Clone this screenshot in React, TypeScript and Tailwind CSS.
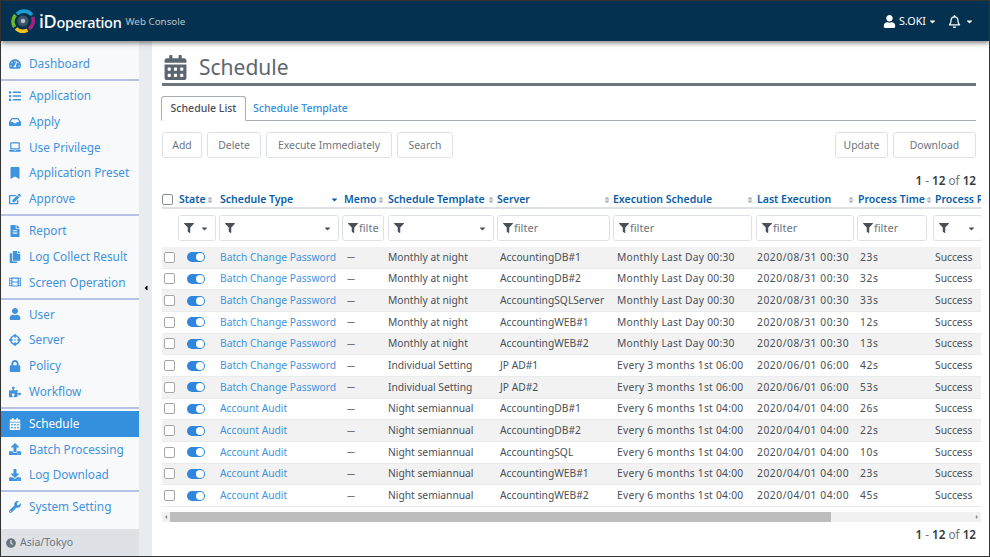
import { FaTachometerAlt, FaList, FaInbox, FaLaptop, FaBookmark, FaEdit, FaFileAlt, FaCopy, FaFilm, FaUser, FaCrosshairs, FaLock, FaPuzzlePiece, FaCalendarAlt, FaUpload, FaDownload, FaWrench, FaClock, FaFilter, FaRegBell, FaSort, FaCaretDown, FaCaretLeft, FaCaretRight } from "react-icons/fa";
import type { IconType } from "react-icons";

const nav: { s: [IconType, string][] }[] = [
  { s: [[FaTachometerAlt, "Dashboard"]] },
  { s: [[FaList, "Application"], [FaInbox, "Apply"], [FaLaptop, "Use Privilege"], [FaBookmark, "Application Preset"], [FaEdit, "Approve"]] },
  { s: [[FaFileAlt, "Report"], [FaCopy, "Log Collect Result"], [FaFilm, "Screen Operation"]] },
  { s: [[FaUser, "User"], [FaCrosshairs, "Server"], [FaLock, "Policy"], [FaPuzzlePiece, "Workflow"]] },
  { s: [[FaCalendarAlt, "Schedule"], [FaUpload, "Batch Processing"], [FaDownload, "Log Download"]] },
  { s: [[FaWrench, "System Setting"]] },
];

const rows = [
  ["Batch Change Password", "Monthly at night", "AccountingDB#1", "Monthly Last Day 00:30", "2020/08/31 00:30", "23s"],
  ["Batch Change Password", "Monthly at night", "AccountingDB#2", "Monthly Last Day 00:30", "2020/08/31 00:30", "32s"],
  ["Batch Change Password", "Monthly at night", "AccountingSQLServer", "Monthly Last Day 00:30", "2020/08/31 00:30", "33s"],
  ["Batch Change Password", "Monthly at night", "AccountingWEB#1", "Monthly Last Day 00:30", "2020/08/31 00:30", "12s"],
  ["Batch Change Password", "Monthly at night", "AccountingWEB#2", "Monthly Last Day 00:30", "2020/08/31 00:30", "13s"],
  ["Batch Change Password", "Individual Setting", "JP AD#1", "Every 3 months 1st 06:00", "2020/06/01 06:00", "42s"],
  ["Batch Change Password", "Individual Setting", "JP AD#2", "Every 3 months 1st 06:00", "2020/06/01 06:00", "53s"],
  ["Account Audit", "Night semiannual", "AccountingDB#1", "Every 6 months 1st 04:00", "2020/04/01 04:00", "26s"],
  ["Account Audit", "Night semiannual", "AccountingDB#2", "Every 6 months 1st 04:00", "2020/04/01 04:00", "22s"],
  ["Account Audit", "Night semiannual", "AccountingSQL", "Every 6 months 1st 04:00", "2020/04/01 04:00", "10s"],
  ["Account Audit", "Night semiannual", "AccountingWEB#1", "Every 6 months 1st 04:00", "2020/04/01 04:00", "23s"],
  ["Account Audit", "Night semiannual", "AccountingWEB#2", "Every 6 months 1st 04:00", "2020/04/01 04:00", "45s"],
];

const cols = "grid grid-cols-[16px_40px_124px_44px_110px_116px_143px_101px_77px_48px] w-[819px]";

function Btn({ w, children }: { w: string; children: string }) {
  return <button className={`${w} h-[26px] pt-[1px] border border-[#dee2e6] rounded-[3px] text-[#6c757d] text-[10.4px] bg-white`}>{children}</button>;
}

function Logo() {
  return (
    <svg width="24" height="24" viewBox="0 0 24 24" className="shrink-0">
      <g fill="none" strokeWidth="3.6">
        <path d="M6 5 A10 10 0 0 1 21 6" stroke="#1d9bd1" />
        <path d="M21.5 8 A10 10 0 0 1 18 20" stroke="#a4237f" />
        <path d="M16.5 21 A10 10 0 0 1 5 19.5" stroke="#f2c318" />
        <path d="M3.6 18 A10 10 0 0 1 4.5 6" stroke="#6eb52f" />
      </g>
      <circle cx="12" cy="12" r="5.6" fill="#3a5468" />
      <circle cx="12" cy="12" r="2.3" fill="#b5bcc2" />
    </svg>
  );
}

function Filter({ w, text, select }: { w: string; text?: string; select?: boolean }) {
  return (
    <div className={`${w} h-[26px] border border-[#dee2e6] rounded-[3px] flex items-center pl-[5px] pr-[6px] text-[#6c757d] text-[11px] overflow-hidden whitespace-nowrap`}>
      <FaFilter className="text-[#495057] text-[10px] shrink-0 mr-[1px]" />
      {text}
      {select && <FaCaretDown className="ml-auto text-[#495057] text-[9px] shrink-0" />}
    </div>
  );
}

function Head({ t, pl, sort = true }: { t: string; pl: string; sort?: boolean }) {
  return (
    <div className={`flex items-center ${pl} pr-[1px] text-[10.5px] font-semibold text-[#0b5ea8] whitespace-nowrap overflow-hidden`}>
      <span>{t}</span>
      {sort && <FaSort className="ml-auto shrink-0 text-[8px] text-[#adb5bd]" />}
    </div>
  );
}

function Pager({ className }: { className: string }) {
  return (
    <div className={`${className} h-[14px] text-right text-[11.7px] leading-[14px] text-[#6c757d]`}>
      <b className="font-semibold text-[#343a40]">1</b> - <b className="font-semibold text-[#343a40]">12</b> of <b className="font-semibold text-[#343a40]">12</b>
    </div>
  );
}

export default function App() {
  return (
    <div className="w-[990px] h-[557px] overflow-hidden flex flex-col border border-[#333] bg-[#e9ecef] text-[#495057] font-['Noto_Sans',sans-serif]">
      <header className="h-[40px] shrink-0 bg-[#03314f] flex items-center pl-[10px] pr-[15px] shadow-[0_2px_5px_rgba(0,0,0,0.5)] relative z-10">
        <Logo />
        <span className="ml-[4px] text-white font-medium tracking-[-0.3px] leading-none flex items-baseline">
          <span className="text-[18px]">iD</span>
          <span className="text-[14.5px]">operation</span>
        </span>
        <span className="ml-[4px] mt-[3px] text-[#b8c4cd] text-[9.8px]">Web Console</span>
        <div className="ml-auto flex items-center text-white">
          <FaUser className="text-[13px]" />
          <span className="ml-[3px] text-[10.8px]">S.OKI</span>
          <FaCaretDown className="ml-[2px] text-[9px]" />
          <FaRegBell className="ml-[11px] text-[13px]" />
          <FaCaretDown className="ml-[4px] text-[9px]" />
        </div>
      </header>
      <div className="flex flex-1 min-h-0">
        <aside className="w-[138px] shrink-0 bg-[#f8f9fa] flex flex-col">
          <div className="flex-1">
            <div className="h-[8px]" />
            {nav.map((g, i) => (
              <div key={i} className={`pb-[2.25px] pt-[2px] ${i < nav.length - 1 ? "border-b-2 border-[#b9c1e6]" : ""}`}>
                {g.s.map(([I, t]) => {
                  const on = t === "Schedule";
                  return (
                    <div key={t} className={`h-[25.75px] flex items-center pl-[8px] text-[11.8px] ${on ? "bg-[#3490dc] text-white" : "text-[#3f93df]"}`}>
                      <span className="w-[20px] flex"><I className="text-[12px]" /></span>
                      <span className="whitespace-nowrap">{t}</span>
                    </div>
                  );
                })}
              </div>
            ))}
          </div>
          <div className="h-[27px] bg-[#dee2e6] flex items-center pl-[5px] text-[#6c757d] text-[10.5px]">
            <FaClock className="text-[10px] mr-[4px]" />
            Asia/Tokyo
          </div>
        </aside>
        <div className="w-[13px] shrink-0 flex items-center justify-center pb-[22px]">
          <FaCaretLeft className="text-black text-[8px]" />
        </div>
        <main className="flex-1 min-w-0 bg-white pl-[10px] pr-[13px] overflow-hidden">
          <div className="h-[45px] pt-[11px] border-b-[3px] border-[#6c757d] flex items-center pl-[1px] text-[#5c6670]">
            <FaCalendarAlt className="text-[25px]" />
            <h1 className="ml-[11px] text-[21px] leading-none">Schedule</h1>
          </div>
          <div className="mt-[10px] h-[25px] border-b border-[#a7adb3] flex text-[10.5px] font-medium">
            <div className="w-[85px] -ml-[1px] h-[25px] pt-[1px] border border-b-white border-[#a7adb3] rounded-t-[3px] bg-white flex items-center justify-center text-[#495057]">Schedule List</div>
            <div className="ml-[7px] pt-[1px] flex items-center text-[#3490dc]">Schedule Template</div>
          </div>
          <div className="mt-[11px] flex gap-[5px]">
            <Btn w="w-[40px]">Add</Btn>
            <Btn w="w-[54px]">Delete</Btn>
            <Btn w="w-[126px]">Execute Immediately</Btn>
            <Btn w="w-[56px]">Search</Btn>
            <div className="flex-1" />
            <Btn w="w-[53px]">Update</Btn>
            <Btn w="w-[83px]">Download</Btn>
          </div>
          <Pager className="mt-[15px]" />
          <div className="w-[820px] overflow-hidden">
            <div className={`${cols} h-[17px] mt-[5px] w-[813px] border-b-2 border-[#dee2e6]`}>
              <div className="flex items-center"><span className="w-[11px] h-[11px] border border-[#8a8f94] rounded-[2px] block" /></div>
              <Head t="State" pl="pl-[1px] mr-[3px]" />
              <div className="flex items-center pr-[3px] pl-[2px] text-[10.5px] font-semibold text-[#0b5ea8] whitespace-nowrap"><span>Schedule Type</span><FaCaretDown className="ml-auto text-[9px]" /></div>
              <Head t="Memo" pl="pl-[2px]" />
              <Head t="Schedule Template" pl="pl-[2px]" />
              <Head t="Server" pl="pl-[1px]" />
              <Head t="Execution Schedule" pl="pl-[1px]" />
              <Head t="Last Execution" pl="pl-[2px]" />
              <Head t="Process Time" pl="pl-[2px]" />
              <Head t="Process Result" pl="pl-[2px]" sort={false} />
            </div>
            <div className={`${cols} mt-[6px] mb-[6px]`}>
              <div />
              <Filter w="w-[38px]" select />
              <div className="pl-[1px]"><Filter w="w-[120px]" select /></div>
              <Filter w="w-[42px]" text="filte" />
              <div className="pl-[2px]"><Filter w="w-[106px]" select /></div>
              <div className="pl-[1px]"><Filter w="w-[113px]" text="filter" /></div>
              <div className="pl-[1px]"><Filter w="w-[139px]" text="filter" /></div>
              <div className="pl-[1px]"><Filter w="w-[98px]" text="filter" /></div>
              <div className="pl-[1px]"><Filter w="w-[70px]" text="filter" /></div>
              <div><Filter w="w-[50px]" select /></div>
            </div>
            {rows.map((r, i) => (
              <div key={i} className={`${cols} h-[21.67px] items-center border-b border-[#e9ecef] text-[10.25px] text-[#495057] whitespace-nowrap ${i % 2 === 0 ? "bg-[#f2f2f2]" : "bg-white"}`}>
                <div className="pl-[2px] flex"><span className="w-[11px] h-[11px] border border-[#a5a5a5] rounded-[2px] block bg-white" /></div>
                <div className="pl-[9px] flex">
                  <span className="w-[18px] h-[10px] rounded-full bg-[#2f86de] flex justify-end items-center pr-[1px]"><span className="w-[8px] h-[8px] rounded-full bg-white" /></span>
                </div>
                <div className="pl-[2px] text-[#3f93df]">{r[0]}</div>
                <div className="pl-[5px] text-[8px]">—</div>
                <div className="pl-[2px]">{r[1]}</div>
                <div className="pl-[4px]">{r[2]}</div>
                <div className="pl-[5px] tracking-[0.25px]">{r[3]}</div>
                <div className="pl-[2px] tracking-[0.55px]">{r[4]}</div>
                <div className="pl-[4px] tracking-[0.6px]">{r[5]}</div>
                <div className="pl-[2px]">Success</div>
              </div>
            ))}
            <div className="mt-[5px] h-[10px] w-[819px] bg-[#f1f1f1] flex items-center">
              <div className="w-[8px] flex justify-center"><FaCaretLeft className="text-[#888] text-[6px]" /></div>
              <div className="w-[661px] h-full bg-[#bdbdbd]" />
              <div className="ml-auto w-[8px] flex justify-center"><FaCaretRight className="text-[#888] text-[6px]" /></div>
            </div>
          </div>
          <Pager className="mt-[5px]" />
        </main>
      </div>
    </div>
  );
}
